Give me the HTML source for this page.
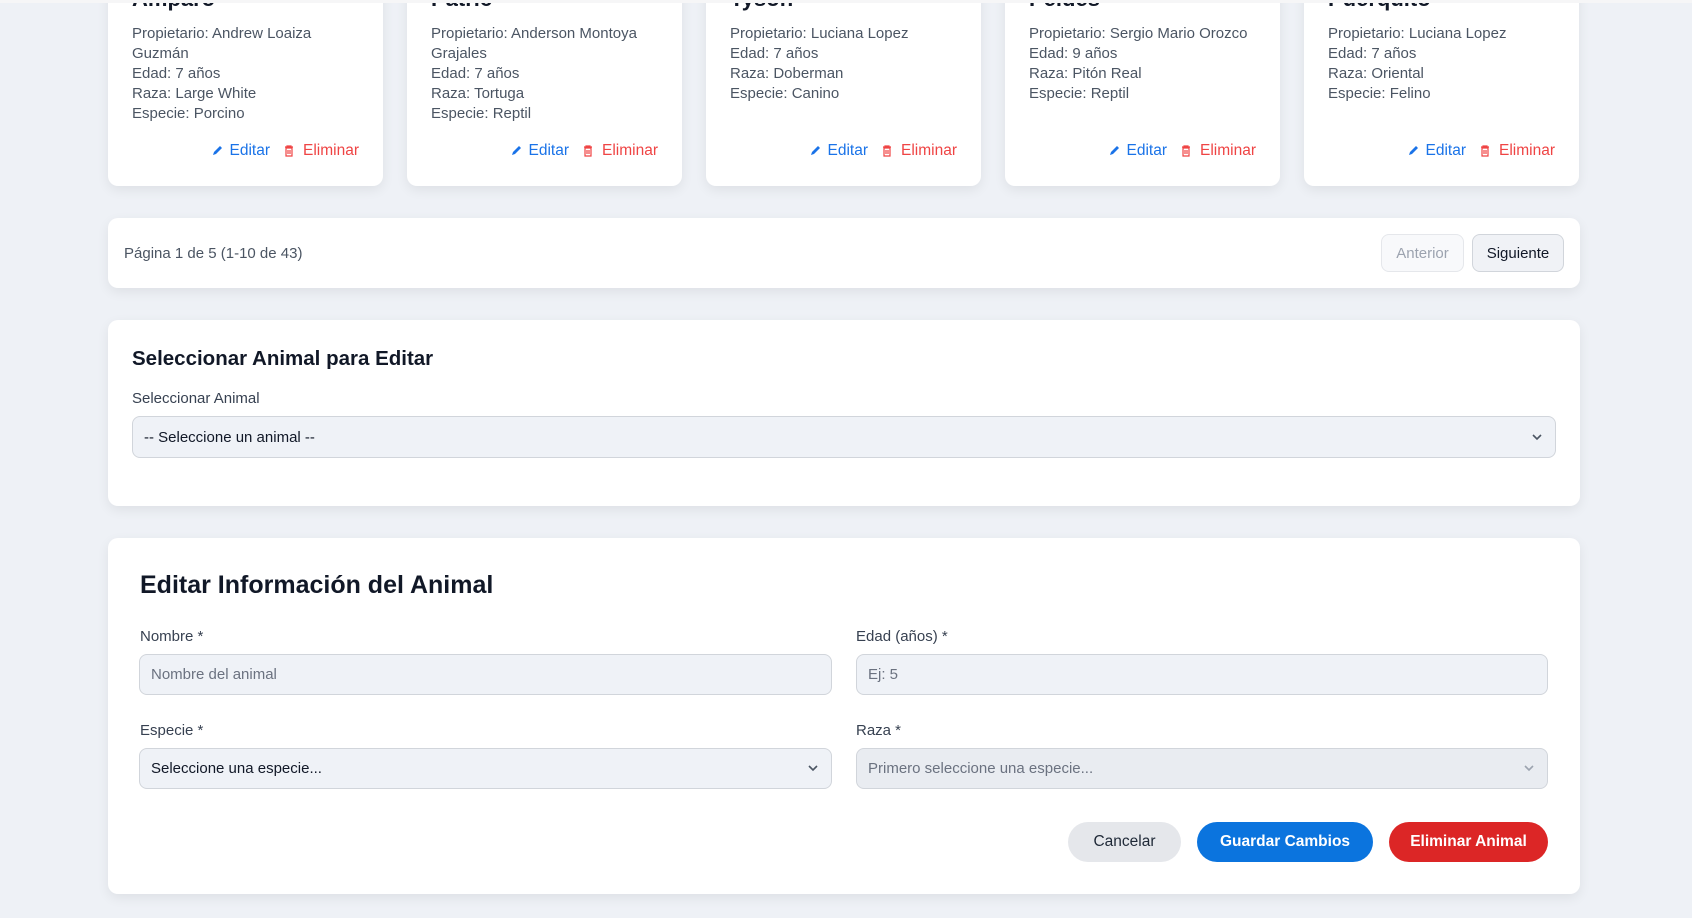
<!DOCTYPE html>
<html><head><meta charset="utf-8"><style>
*{box-sizing:border-box;margin:0;padding:0}
body{width:1692px;height:918px;overflow:hidden;background:#eef1f6;font-family:"Liberation Sans",sans-serif;position:relative;color:#111827}
.topbar{position:absolute;left:0;top:0;width:1692px;height:3px;background:#f6f6f7}
.card{position:absolute;background:#fff;border-radius:10px;box-shadow:0 4px 12px rgba(0,0,0,.07)}
.acard{top:-20px;width:275px;height:206px;overflow:hidden}
.acard h3{position:absolute;left:24px;top:6px;font-size:22px;font-weight:bold;color:#111827}
.acard .info{position:absolute;left:24px;top:44px;font-size:15px;line-height:20px;color:#4b5563;width:215px}
.acts{position:absolute;right:24px;top:162px;font-size:15.5px;display:flex;align-items:center}
.ed{color:#1a73e8;margin-left:7px;margin-right:14px}
.el{color:#ef4444;margin-left:9px}
.btn{position:absolute;border-radius:8px;font-size:15px;display:flex;align-items:center;justify-content:center}
label{position:absolute;font-size:15px;color:#374151}
.inp{position:absolute;height:41px;border:1px solid #d1d5db;border-radius:8px;background:#eff2f7;font-size:15px;display:flex;align-items:center;padding-left:11px;color:#6b7280}
.chev{position:absolute;right:12px;top:15px}
.pill{position:absolute;top:822px;height:40px;border-radius:20px;font-size:15.5px;font-weight:bold;display:flex;align-items:center;justify-content:center}
</style></head><body>

<div class="card acard" style="left:108px"><h3>Amparo</h3><div class="info">Propietario: Andrew Loaiza Guzmán<br>Edad: 7 años<br>Raza: Large White<br>Especie: Porcino</div><div class="acts"><svg width="12" height="12" viewBox="0 0 12 12"><path d="M2 10 L3 7 L9 1 L11 3 L5 9 Z" fill="#1a73e8"/></svg><span class="ed">Editar</span><svg width="10" height="12" viewBox="0 0 10 12"><path d="M1 2h8M3 2V1h4v1M2 3h6v8H2z M4 5v4M6 5v4" fill="none" stroke="#ef4444" stroke-width="1.2"/></svg><span class="el">Eliminar</span></div></div>
<div class="card acard" style="left:407px"><h3>Patric</h3><div class="info">Propietario: Anderson Montoya Grajales<br>Edad: 7 años<br>Raza: Tortuga<br>Especie: Reptil</div><div class="acts"><svg width="12" height="12" viewBox="0 0 12 12"><path d="M2 10 L3 7 L9 1 L11 3 L5 9 Z" fill="#1a73e8"/></svg><span class="ed">Editar</span><svg width="10" height="12" viewBox="0 0 10 12"><path d="M1 2h8M3 2V1h4v1M2 3h6v8H2z M4 5v4M6 5v4" fill="none" stroke="#ef4444" stroke-width="1.2"/></svg><span class="el">Eliminar</span></div></div>
<div class="card acard" style="left:706px"><h3>Tyson</h3><div class="info">Propietario: Luciana Lopez<br>Edad: 7 años<br>Raza: Doberman<br>Especie: Canino</div><div class="acts"><svg width="12" height="12" viewBox="0 0 12 12"><path d="M2 10 L3 7 L9 1 L11 3 L5 9 Z" fill="#1a73e8"/></svg><span class="ed">Editar</span><svg width="10" height="12" viewBox="0 0 10 12"><path d="M1 2h8M3 2V1h4v1M2 3h6v8H2z M4 5v4M6 5v4" fill="none" stroke="#ef4444" stroke-width="1.2"/></svg><span class="el">Eliminar</span></div></div>
<div class="card acard" style="left:1005px"><h3>Peldes</h3><div class="info" style="width:240px">Propietario: Sergio Mario Orozco<br>Edad: 9 años<br>Raza: Pitón Real<br>Especie: Reptil</div><div class="acts"><svg width="12" height="12" viewBox="0 0 12 12"><path d="M2 10 L3 7 L9 1 L11 3 L5 9 Z" fill="#1a73e8"/></svg><span class="ed">Editar</span><svg width="10" height="12" viewBox="0 0 10 12"><path d="M1 2h8M3 2V1h4v1M2 3h6v8H2z M4 5v4M6 5v4" fill="none" stroke="#ef4444" stroke-width="1.2"/></svg><span class="el">Eliminar</span></div></div>
<div class="card acard" style="left:1304px"><h3>Puerquito</h3><div class="info">Propietario: Luciana Lopez<br>Edad: 7 años<br>Raza: Oriental<br>Especie: Felino</div><div class="acts"><svg width="12" height="12" viewBox="0 0 12 12"><path d="M2 10 L3 7 L9 1 L11 3 L5 9 Z" fill="#1a73e8"/></svg><span class="ed">Editar</span><svg width="10" height="12" viewBox="0 0 10 12"><path d="M1 2h8M3 2V1h4v1M2 3h6v8H2z M4 5v4M6 5v4" fill="none" stroke="#ef4444" stroke-width="1.2"/></svg><span class="el">Eliminar</span></div></div>
<div class="topbar"></div>

<div class="card" style="left:108px;top:218px;width:1472px;height:70px">
 <div style="position:absolute;left:16px;top:27px;font-size:15px;color:#4b5563">Página 1 de 5 (1-10 de 43)</div>
 <div class="btn" style="left:1273px;top:16px;width:83px;height:38px;border:1px solid #e5e7eb;background:#f8f9fb;color:#9ca3af">Anterior</div>
 <div class="btn" style="left:1364px;top:16px;width:92px;height:38px;border:1px solid #d1d5db;background:#f0f2f6;color:#111827">Siguiente</div>
</div>

<div class="card" style="left:108px;top:320px;width:1472px;height:186px">
 <div style="position:absolute;left:24px;top:27px;font-size:20.5px;font-weight:bold">Seleccionar Animal para Editar</div>
 <label style="left:24px;top:70px">Seleccionar Animal</label>
 <div class="inp" style="left:24px;top:96px;width:1424px;height:42px;color:#111827">-- Seleccione un animal --<svg class="chev" width="12" height="8" viewBox="0 0 12 8" style="right:12px;top:16px"><path d="M2 2l4 4 4-4" fill="none" stroke="#4b5563" stroke-width="1.6"/></svg></div>
</div>

<div class="card" style="left:108px;top:538px;width:1472px;height:356px">
 <div style="position:absolute;left:32px;top:33px;font-size:25px;font-weight:bold">Editar Información del Animal</div>
 <label style="left:32px;top:90px">Nombre *</label>
 <label style="left:748px;top:90px">Edad (años) *</label>
 <div class="inp" style="left:31px;top:116px;width:693px">Nombre del animal</div>
 <div class="inp" style="left:748px;top:116px;width:692px">Ej: 5</div>
 <label style="left:32px;top:184px">Especie *</label>
 <label style="left:748px;top:184px">Raza *</label>
 <div class="inp" style="left:31px;top:210px;width:693px;color:#111827">Seleccione una especie...<svg class="chev" width="12" height="8" viewBox="0 0 12 8"><path d="M2 2l4 4 4-4" fill="none" stroke="#4b5563" stroke-width="1.6"/></svg></div>
 <div class="inp" style="left:748px;top:210px;width:692px;background:#e9ecf1">Primero seleccione una especie...<svg class="chev" width="12" height="8" viewBox="0 0 12 8"><path d="M2 2l4 4 4-4" fill="none" stroke="#9ca3af" stroke-width="1.6"/></svg></div>
</div>
<div class="pill" style="left:1068px;width:113px;background:#e5e7eb;color:#1f2937;font-weight:normal">Cancelar</div>
<div class="pill" style="left:1197px;width:176px;background:#0b74de;color:#fff">Guardar Cambios</div>
<div class="pill" style="left:1389px;width:159px;background:#dc2626;color:#fff">Eliminar Animal</div>
</body></html>
